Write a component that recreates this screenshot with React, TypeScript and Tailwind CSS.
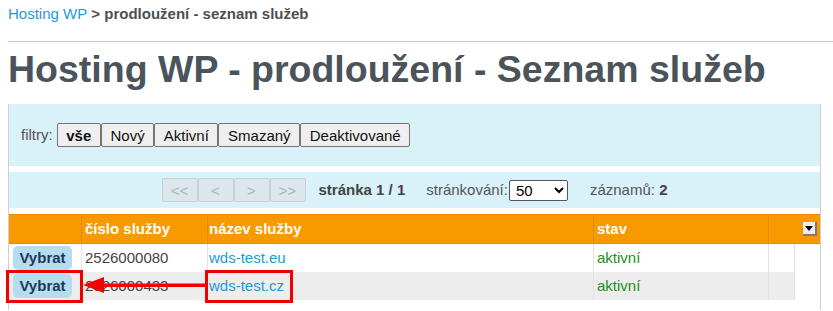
import React from 'react';

const filters = ['vše', 'Nový', 'Aktivní', 'Smazaný', 'Deaktivované'];
const pager = ['<<', '<', '>', '>>'];

const rows = [
  { id: '2526000080', name: 'wds-test.eu', state: 'aktivní' },
  { id: '2526000433', name: 'wds-test.cz', state: 'aktivní' },
];

function HeaderMenu() {
  return (
    <div className="w-[14px] h-[14px] bg-[#ececec] border-r-2 border-b-2 border-[#7a7a7a] flex items-center justify-center">
      <svg width="8" height="5" viewBox="0 0 8 5">
        <path d="M0 0h8L4 5z" fill="#000" />
      </svg>
    </div>
  );
}

export default function App() {
  return (
    <div className="pl-2 bg-white text-[15px] text-[#555] font-['Liberation_Sans',Arial,sans-serif]">
      {/* Breadcrumb */}
      <div className="pt-[5px] leading-[18px]">
        <a className="text-[#1e9ad6]">Hosting WP</a>
        <span className="font-bold text-[#4b4f54]"> &gt; prodloužení - seznam služeb</span>
      </div>

      <div className="mt-[18px] border-t border-[#bcd3dc]" />

      <h1 className="mt-[6px] text-[37.5px] leading-[42px] font-bold text-[#4b535b]">
        Hosting WP - prodloužení - Seznam služeb
      </h1>

      <div className="mt-[14px] mr-3 border-x border-[#cfcfcf] pb-[10px]">
        {/* Filters */}
        <div className="h-[62px] bg-[#d9f1f8] flex items-center pl-3 gap-1">
          <span>filtry:</span>
          <div className="flex">
            {filters.map((f, i) => (
              <button
                key={f}
                className={`h-[24px] px-[8.6px] bg-[#efefef] border border-[#767676] rounded-[2px] text-[#111] leading-none ${i === 0 ? 'font-bold' : ''}`}
              >
                {f}
              </button>
            ))}
          </div>
        </div>

        {/* Pager */}
        <div className="mt-[6px] h-[36px] bg-[#d9f1f8] flex items-center justify-center">
          <div className="flex">
            {pager.map((p) => (
              <button
                key={p}
                disabled
                className="w-[36px] h-[24px] bg-[#dbe7eb] border border-[#c5d1d6] rounded-[2px] text-[#aab3b7] leading-none"
              >
                {p}
              </button>
            ))}
          </div>
          <span className="ml-[13px] font-bold text-[#444]">stránka 1 / 1</span>
          <span className="ml-[21px]">stránkování:</span>
          <select
            defaultValue="50"
            className="ml-px w-[59px] h-[21px] bg-white border border-[#555] rounded-[2px] text-[15px] text-black pl-[2px]"
          >
            <option>10</option>
            <option>20</option>
            <option>50</option>
            <option>100</option>
          </select>
          <span className="ml-[22px]">
            záznamů: <b className="text-[#444]">2</b>
          </span>
        </div>

        {/* Header */}
        <div className="mt-[6px] h-[30px] bg-[#f99900] border-y border-[#e58c00] flex text-white font-bold">
          <div className="w-[73px] border-r border-[#e58c00]" />
          <div className="w-[126px] border-r border-[#e58c00] flex items-center px-[3px]">číslo služby</div>
          <div className="w-[386px] border-r border-[#e58c00] flex items-center px-[1px]">název služby</div>
          <div className="w-[175px] border-r border-[#e58c00] flex items-center px-[3px]">stav</div>
          <div className="flex-1 flex items-center justify-end pr-[3px]">
            <HeaderMenu />
          </div>
        </div>

        {/* Body */}
        <div className="relative">
          {rows.map((r, i) => (
            <div key={r.id} className={`flex h-[28px] ${i % 2 ? 'bg-[#ededed]' : 'bg-white'} w-[786px]`}>
              <div className="w-[73px] border-r border-[#e2e2e2] flex items-center pl-[4px]">
                <button className="h-[24px] w-[59px] rounded-[5px] bg-[#b5dcef] font-bold text-[#1d3a57]">
                  Vybrat
                </button>
              </div>
              <div className="w-[126px] border-r border-[#e2e2e2] flex items-center px-[3px] text-[#444]">{r.id}</div>
              <div className="w-[386px] border-r border-[#e2e2e2] flex items-center px-[1px] text-[#1e9ad6]">{r.name}</div>
              <div className="w-[175px] border-r border-[#e2e2e2] flex items-center px-[3px] text-[#23901c]">{r.state}</div>
              <div className="flex-1 border-r border-[#e2e2e2]" />
            </div>
          ))}

          {/* Annotations */}
          <div className="absolute left-[-3px] top-[26px] w-[77px] h-[33px] border-[3px] border-[#f20000]" />
          <div className="absolute left-[196px] top-[26px] w-[88px] h-[33px] border-[3px] border-[#f20000]" />
          <svg className="absolute left-[74px] top-[33px]" width="124" height="16" viewBox="0 0 124 16">
            <path d="M18 6.5h106v3.5H18z" fill="#f20000" />
            <path d="M0 8L21 0v16z" fill="#f20000" />
          </svg>
        </div>
      </div>
    </div>
  );
}
